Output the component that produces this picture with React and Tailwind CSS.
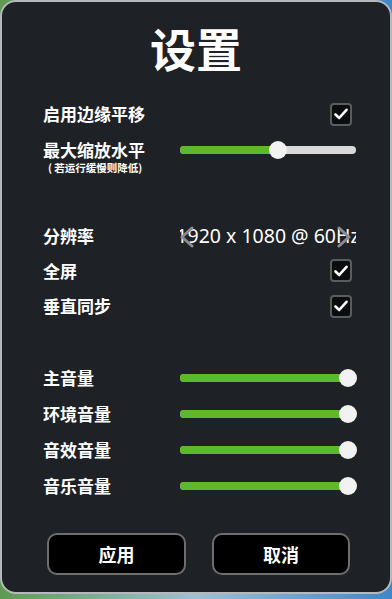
import React, { useState } from "react";

const cjk = { fontFamily: '"Noto Sans CJK SC", "Noto Sans", sans-serif' };

const Checkbox = ({ checked, onChange }) => (
  <button
    onClick={onChange}
    className="w-[22px] h-[23px] rounded-[4px] border-2 border-[#5a5d60] bg-[#0b0c0d] flex items-center justify-center"
  >
    {checked && (
      <svg width="14" height="12" viewBox="0 0 14 12">
        <path
          d="M1.5 6.5 L5.2 10 L12.5 1.8"
          fill="none"
          stroke="#ffffff"
          strokeWidth="2.6"
          strokeLinecap="round"
          strokeLinejoin="round"
        />
      </svg>
    )}
  </button>
);

const Slider = ({ value }) => (
  <div className="relative w-[176px] h-[18px] flex items-center">
    <div className="w-full h-[8px] rounded-full bg-[#d9d9d9] overflow-hidden">
      <div
        className="h-full bg-[#5db82c]"
        style={{ width: `${8 + value * 160}px` }}
      />
    </div>
    <div
      className="absolute top-[0px] w-[18px] h-[18px] rounded-full bg-[#f2f2f2]"
      style={{ left: `${value * 160 - 1}px` }}
    />
  </div>
);

const Label = ({ children }) => (
  <div className="w-[137px] text-[17px] font-bold text-white leading-[20px]" style={cjk}>
    {children}
  </div>
);

export default function App() {
  const [edgePan, setEdgePan] = useState(true);
  const [fullscreen, setFullscreen] = useState(true);
  const [vsync, setVsync] = useState(true);

  return (
    <div className="w-[392px] h-[599px] bg-gradient-to-r from-[#5f9a52] via-[#9fc0d4] to-[#3f86c8]">
      <div className="w-[392px] h-[594px] rounded-[16px] border-2 border-[#b4b9bd] bg-[#1e2125] flex flex-col">
        {/* Title */}
        <div
          className="h-[90px] flex items-center justify-center text-[46px] font-bold text-white"
          style={cjk}
        >
          设置
        </div>

        <div className="pl-[41px] flex flex-col">
          <div className="h-[44px] flex items-center">
            <Label>启用边缘平移</Label>
            <div className="w-[176px] flex justify-end pr-[4px]">
              <Checkbox checked={edgePan} onChange={() => setEdgePan(!edgePan)} />
            </div>
          </div>

          <div className="h-[28px] flex items-center">
            <Label>最大缩放水平</Label>
            <Slider value={0.5625} />
          </div>
          <div
            className="-mt-[2px] pl-[5px] text-[10.5px] font-bold text-white leading-[11px]"
            style={cjk}
          >
            (&nbsp;若运行缓慢则降低)
          </div>

          <div className="h-[46px]" />

          <div className="h-[34px] flex items-center">
            <Label>分辨率</Label>
            <div className="relative w-[176px] h-[26px] overflow-hidden flex items-center justify-center">
              <span
                className="whitespace-nowrap text-[19.5px] text-white leading-[26px]"
                style={{ fontFamily: '"Noto Sans", sans-serif' }}
              >
                1920 x 1080 @ 60Hz
              </span>
              <svg
                className="absolute left-[-1px] top-[3px]"
                width="16"
                height="22"
                viewBox="0 0 16 22"
              >
                <path
                  d="M13 2 L3 11 L13 20"
                  fill="none"
                  stroke="#8a8d90"
                  strokeWidth="3"
                  strokeLinecap="round"
                  strokeLinejoin="round"
                />
              </svg>
              <svg
                className="absolute left-[156px] top-[3px]"
                width="16"
                height="22"
                viewBox="0 0 16 22"
              >
                <path
                  d="M3 2 L13 11 L3 20"
                  fill="none"
                  stroke="#8a8d90"
                  strokeWidth="3"
                  strokeLinecap="round"
                  strokeLinejoin="round"
                />
              </svg>
            </div>
          </div>

          <div className="h-[35px] flex items-center">
            <Label>全屏</Label>
            <div className="w-[176px] flex justify-end pr-[4px]">
              <Checkbox checked={fullscreen} onChange={() => setFullscreen(!fullscreen)} />
            </div>
          </div>

          <div className="h-[36px] flex items-center">
            <Label>垂直同步</Label>
            <div className="w-[176px] flex justify-end pr-[4px]">
              <Checkbox checked={vsync} onChange={() => setVsync(!vsync)} />
            </div>
          </div>

          <div className="h-[36px]" />

          {["主音量", "环境音量", "音效音量", "音乐音量"].map((name) => (
            <div key={name} className="h-[36px] flex items-center">
              <Label>{name}</Label>
              <Slider value={1} />
            </div>
          ))}
        </div>

        {/* Buttons */}
        <div className="mt-[29px] pl-[45px] flex gap-[26px]">
          <button
            className="w-[139px] h-[42px] rounded-[10px] border-2 border-[#6e6e6e] bg-black text-white text-[18px] font-bold"
            style={cjk}
          >
            应用
          </button>
          <button
            className="w-[138px] h-[42px] rounded-[10px] border-2 border-[#6e6e6e] bg-black text-white text-[18px] font-bold"
            style={cjk}
          >
            取消
          </button>
        </div>
      </div>
    </div>
  );
}
